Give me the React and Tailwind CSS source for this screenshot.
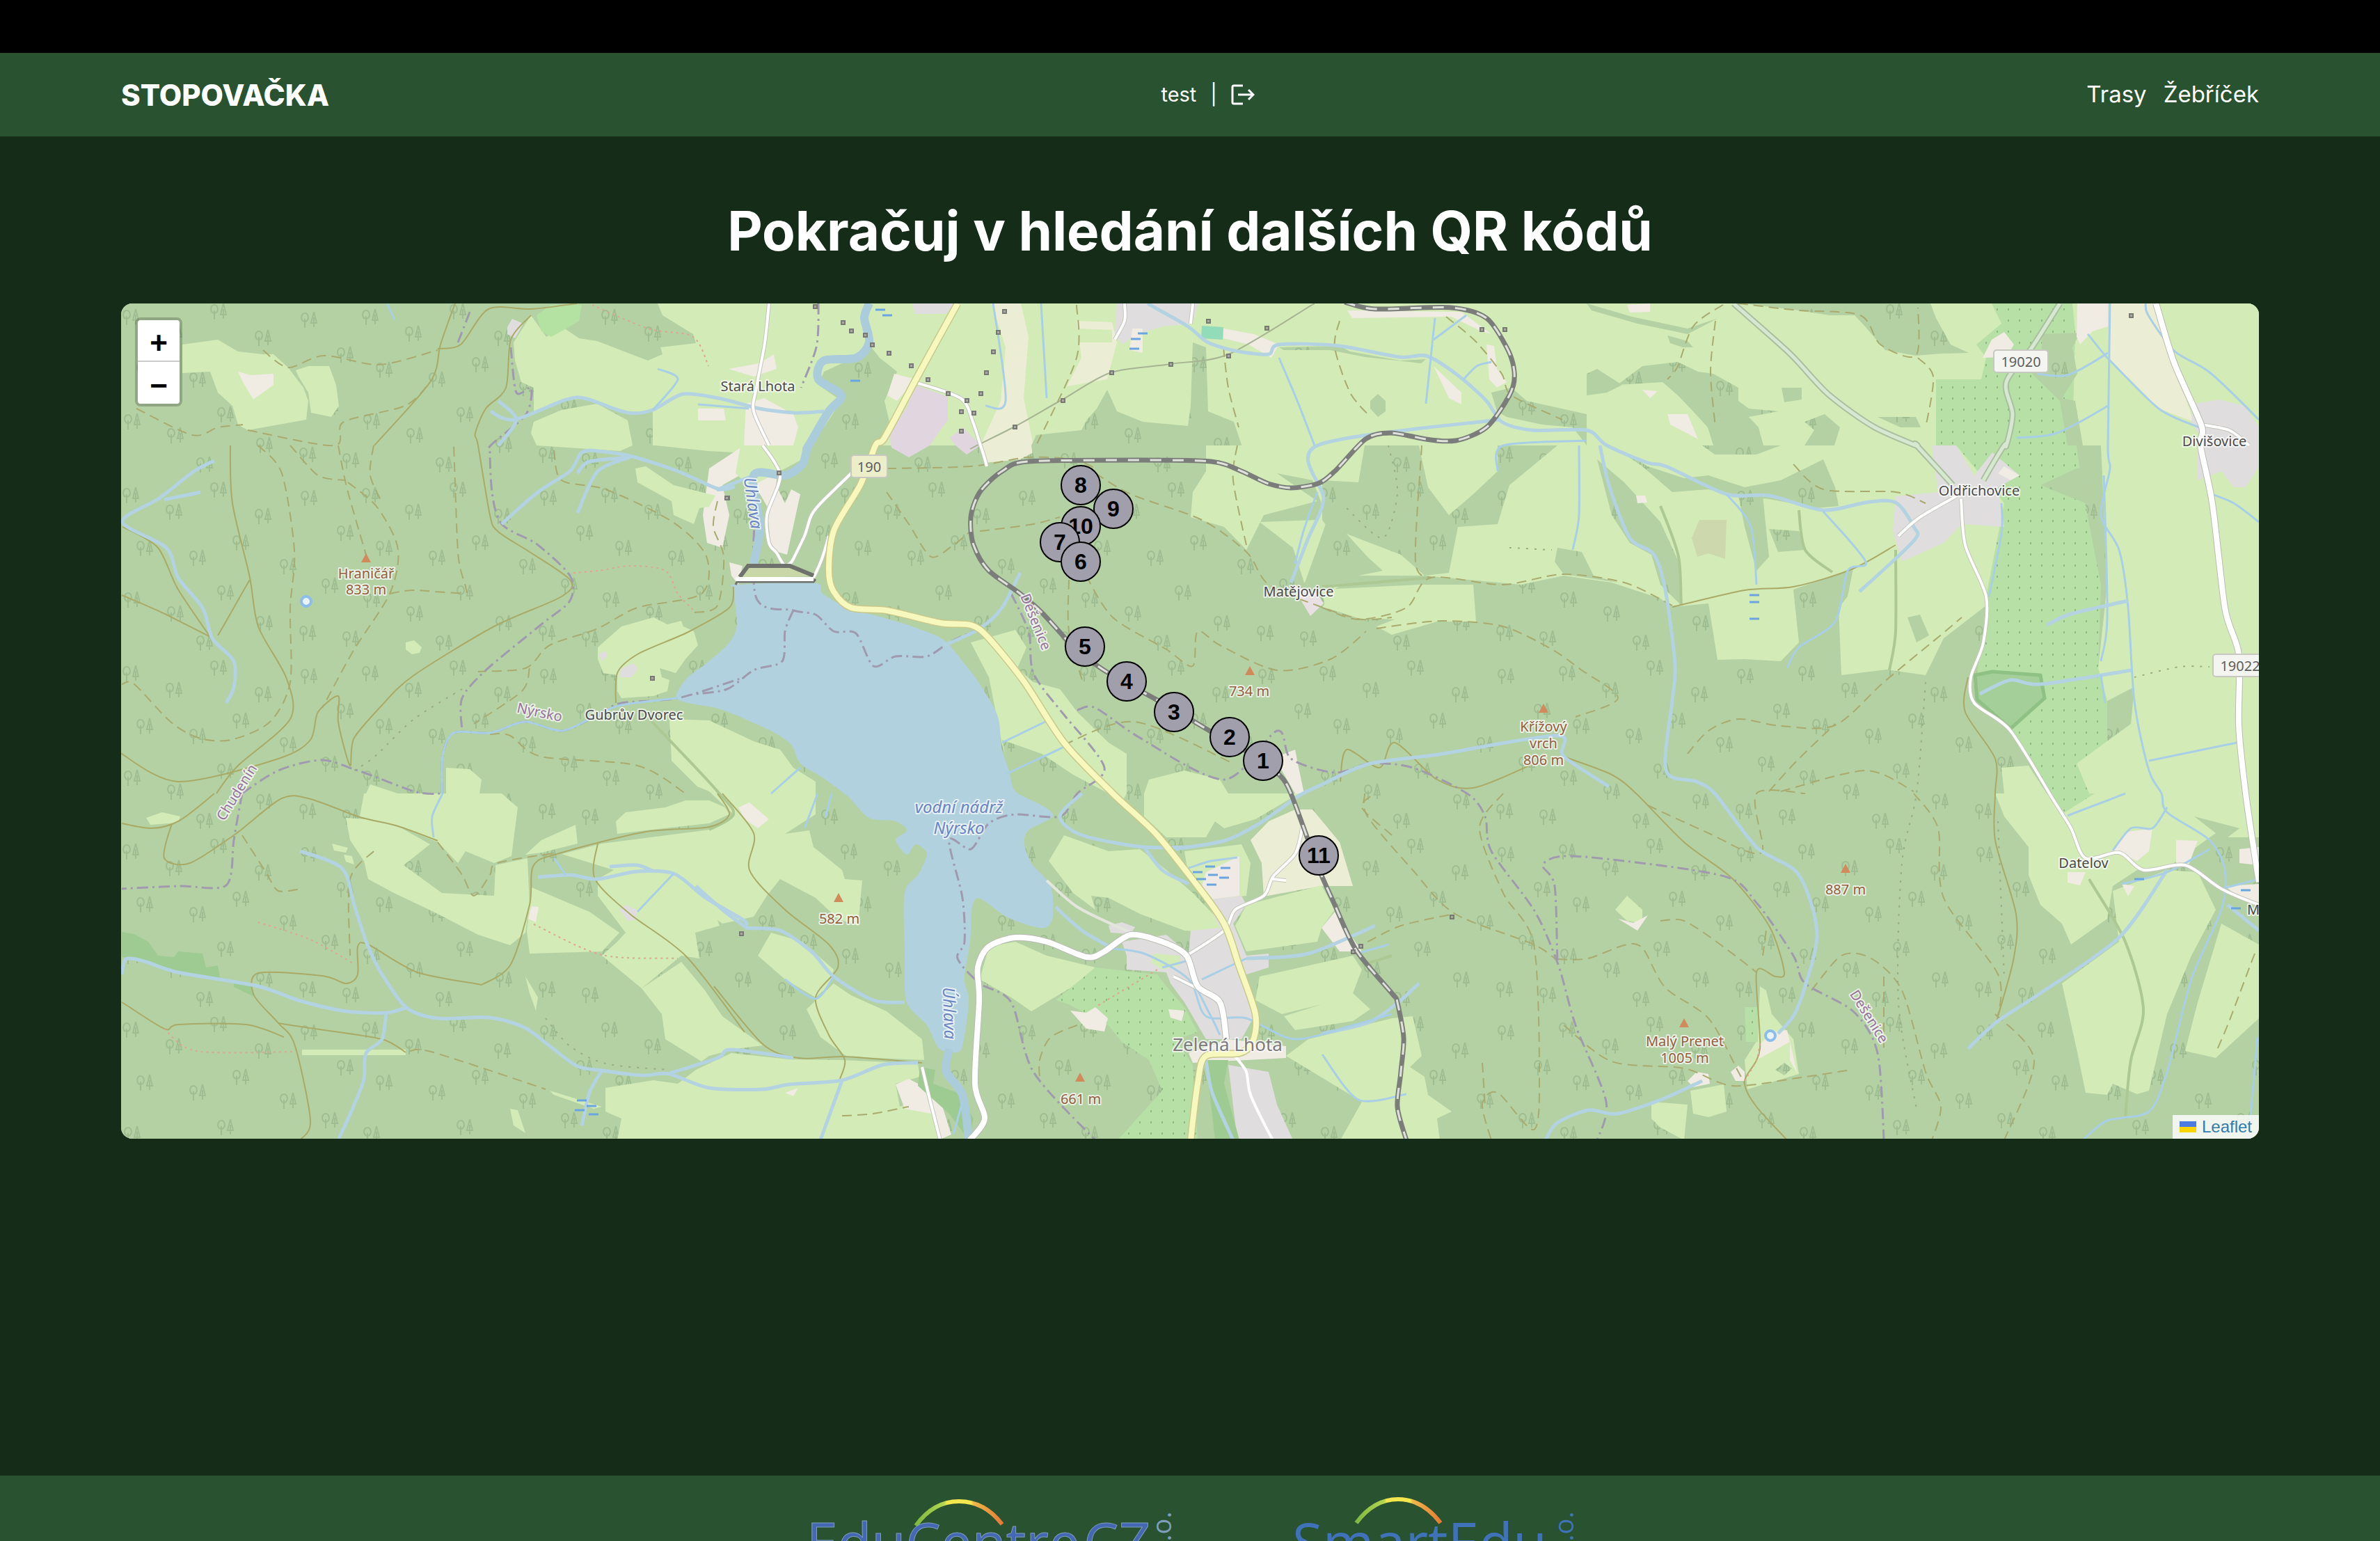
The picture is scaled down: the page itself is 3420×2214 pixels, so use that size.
import React from "react";

/* ---------- map geometry ---------- */

const MAP_W = 3072;
const MAP_H = 1200;

// Survey sheets: [x, y, width, height, unitsX, unitsY] in map units.
const SHEETS = {
  1: [-174, -396, 1140, 600, 1568, 1568],
  2: [966, -396, 1140, 600, 1568, 1568],
  3: [2106, -396, 1140, 600, 1568, 1568],
  4: [-4, 204, 900, 500, 1568, 1500],
  5: [826, 204, 1000, 500, 1568, 1500],
  6: [1726, 204, 1360, 500, 1568, 1500],
  7: [-4, 704, 900, 510, 1568, 1530],
  8: [826, 704, 1000, 510, 1568, 1530],
  9: [1726, 704, 1360, 510, 1568, 1530],
};

// "4:10,20 30,40 5:0,10" -> points; a "n:" prefix switches to sheet n.
function toPoints(src) {
  let sheet = SHEETS[1];
  return src.trim().split(/\s+/).map((tok) => {
    let t = tok;
    const i = t.indexOf(":");
    if (i > 0) {
      sheet = SHEETS[t.slice(0, i)];
      t = t.slice(i + 1);
    }
    const [u, v] = t.split(",").map(Number);
    const [x, y, w, h, ux, uy] = sheet;
    return [Math.round(x + (u * w) / ux), Math.round(y + (v * h) / uy)];
  });
}

const polygon = (src) => "M" + toPoints(src).map((p) => p.join(" ")).join("L") + "Z";
const polyline = (src) => "M" + toPoints(src).map((p) => p.join(" ")).join("L");

function curve(src, closed) {
  const p = toPoints(src);
  const n = p.length;
  const at = (i) => (closed ? p[(i + n) % n] : p[Math.max(0, Math.min(n - 1, i))]);
  let d = `M${p[0][0]} ${p[0][1]}`;
  const last = closed ? n : n - 1;
  for (let i = 0; i < last; i++) {
    const a = at(i - 1), b = at(i), c = at(i + 1), e = at(i + 2);
    const k = 7;
    d += `C${Math.round(b[0] + (c[0] - a[0]) / k)} ${Math.round(b[1] + (c[1] - a[1]) / k)} ${Math.round(c[0] - (e[0] - b[0]) / k)} ${Math.round(c[1] - (e[1] - b[1]) / k)} ${c[0]} ${c[1]}`;
  }
  return closed ? d + "Z" : d;
}

const MEADOW = "#d3ebb6";
const FOREST = "#b4d1a4";
const ORCHARD = "#b6e0a6";
const FARM = "#f0ebe3";
const FIELD = "#ecedd5";
const TOWN = "#dfdddd";
const INDUSTRY = "#e1d6e0";
const RESERVE = "#9ecb91";

const LAND = [
  [MEADOW, "1:360,1190 430,1170 470,1215 520,1225 540,1225 570,1275 600,1350 610,1400 605,1470 490,1510 470,1490 460,1420 430,1370 415,1290 360,1295"],
  [MEADOW, "1:585,1285 610,1270 650,1270 665,1340 670,1420 655,1460 615,1445 610,1370 590,1310"],
  [FARM, "1:470,1290 495,1305 540,1300 540,1340 500,1395 480,1330"],
  [MEADOW, "1:1015,1180 1050,1080 1080,1160 1110,1120 1145,1165 1180,1175 1280,1250 1310,1225 1305,1200 1375,1185 1370,1150 1310,1080 1300,1035 1568,1035 1568,1568 1290,1568 1290,1440 1240,1442 1160,1390 1110,1400 1055,1445 1055,1350 1030,1330 1018,1250"],
  [MEADOW, "1:1055,1480 1110,1435 1180,1410 1240,1475 1250,1568 1225,1590 1060,1568 1050,1520"],
  [MEADOW, "1:1300,1440 1568,1440 1568,1568 1500,1600 1400,1590 1295,1568"],
  ["#b4e2a2", "1:1060,1080 1090,1040 1150,1040 1145,1100 1120,1130 1090,1160 1070,1140"],
  [TOWN, "1:1003,1125 1013,1092 1034,1110 1018,1165 1003,1150"],
  [FARM, "1:1380,1430 1430,1430 1435,1475 1380,1475"],
  [FARM, "1:1440,1280 1500,1260 1530,1225 1535,1280 1490,1310"],

  [MEADOW, "2:0,1030 1568,1030 1568,1568 0,1568"],
  [MEADOW, "3:0,1030 1329,1030 1329,1568 0,1568"],
  [FARM, "1:1475,1410 1510,1390 1568,1450 2:10,1500 0,1568 5:60,170 75,300 60,440 25,420 15,300 30,100 1:1470,1568"],
  ["forest", "2:60,1290 120,1240 150,1190 170,1240 205,1290 180,1400 190,1480 160,1580 5:330,90 250,250 200,480 130,520 120,400 160,260 170,180 2:60,1500 95,1400 50,1340"],
  [FARM, "5:130,60 190,50 180,170 200,250 215,190 235,210 205,470 170,450 160,260 115,110"],
  [INDUSTRY, "2:240,1340 305,1385 305,1470 270,1568 5:480,50 440,10 2:190,1530 225,1420"],
  [FARM, "2:200,1300 242,1320 205,1400 185,1380"],
  [INDUSTRY, "2:335,1500 370,1568 5:610,40 585,0 2:310,1540"],
  [FIELD, "2:390,1035 450,1035 465,1160 455,1390 475,1568 5:760,30 730,60 650,75 2:370,1568 410,1400 420,1200 395,1050"],
  [FIELD, "2:560,1100 630,1105 640,1180 620,1320 540,1345 570,1240"],
  [MEADOW, "2:560,1130 630,1135 630,1180 560,1180"],
  [TOWN, "2:640,1035 800,1035 790,1110 730,1120 680,1150 650,1190 635,1150"],
  [TOWN, "2:235,1035 330,1035 300,1075 240,1075"],
  [FARM, "2:670,1130 690,1130 690,1220 665,1210"],
  ["#92dcba", "2:808,1118 850,1125 848,1172 806,1165"],
  [FARM, "2:850,1130 910,1150 960,1190 945,1240 900,1190 850,1165"],
  [FARM, "2:1370,1190 1385,1195 1390,1280 1410,1330 1390,1350 1375,1320"],
  [FARM, "2:1265,1270 1320,1370 1320,1415 1295,1390"],
  [FARM, "2:1095,1060 1320,1065 1380,1150 1360,1140 1300,1085 1105,1090"],
  ["forest", "2:470,1568 480,1530 570,1510 580,1470 600,1430 620,1360 640,1440 690,1480 780,1495 785,1420 790,1180 815,1200 820,1440 870,1480 890,1590 5:1150,0 1150,110 1120,200 1115,310 1190,350 1240,440 1290,540 1340,590 1300,640 900,640 760,60"],
  ["forest", "2:1380,1370 1420,1350 1450,1400 1568,1450 1568,1568 1540,1500 1480,1490 1410,1460 1390,1440"],
  ["forest", "2:1140,1400 1155,1375 1170,1400 1170,1440 1155,1460 1140,1430"],
  ["forest", "2:960,1200 1080,1195 1100,1215 1200,1250 1250,1245 1240,1260 1130,1235 1060,1210 970,1210"],

  ["forest", "3:160,1155 200,1175 210,1200 190,1200 165,1185"],
  ["forest", "3:60,1340 110,1270 180,1255 220,1290 250,1300 300,1350 300,1400 320,1430 380,1440 320,1460 340,1500 350,1568 250,1568 240,1500 210,1440 180,1380 150,1330"],
  ["forest", "3:385,1350 425,1350 425,1395 390,1405"],
  ["forest", "3:430,1480 470,1450 500,1500 490,1568 430,1568 450,1510"],
  ["forest", "3:575,1460 650,1460 660,1500 620,1500"],
  ["forest", "3:310,1035 680,1035 690,1090 720,1190 755,1220 700,1222 650,1230 590,1210 550,1120 530,1080 480,1080 420,1060"],
  ["forest", "3:0,1035 90,1085 200,1130 260,1090 200,1150 100,1110 10,1060"],
  ["forest", "3:0,1300 20,1280 70,1340 40,1370 0,1380"],
  [FARM, "3:80,1040 125,1035 125,1065 85,1070"],
  [FARM, "3:110,1360 140,1365 125,1390"],
  [FARM, "3:160,1450 200,1450 220,1545 205,1530 165,1490"],
  [ORCHARD, "3:690,1320 780,1320 790,1240 770,1190 820,1110 800,1035 960,1035 965,1140 960,1568 690,1568"],
  ["forest", "3:900,1150 975,1145 960,1200 970,1300 940,1390 965,1400 980,1568 950,1568 935,1400 880,1300 900,1220"],
  [FARM, "3:782,1240 800,1170 825,1143 845,1190 830,1235"],
  [FARM, "3:970,1035 1030,1035 1030,1120 1000,1140 975,1190 968,1160"],
  [FIELD, "3:1035,1035 1125,1035 1150,1150 1165,1300 1185,1400 1200,1480 1130,1430 1080,1330 1035,1250"],
  [TOWN, "3:1200,1410 1250,1395 1300,1420 1329,1500 6:1552,90 1530,180 1510,180 1490,110 1450,150 1450,0 3:1215,1540 1195,1480"],

  [MEADOW, "4:1295,100 1320,90 1390,170 1495,215 1480,265 1455,270 1440,340 1390,300 1385,240 1300,160"],
  [MEADOW, "4:1200,870 1260,780 1340,740 1375,770 1410,755 1415,780 1440,800 1452,860 1420,920 1395,980 1355,960 1360,1000 1380,1010 1375,1060 1340,1080 1260,1090 1250,1060 1250,990 1215,980 1200,920"],
  [MEADOW, "4:720,850 740,840 760,870 755,895 735,900 720,880"],
  [TOWN, "4:1260,960 1290,940 1302,960 1285,1000 1255,1000"],
  [TOWN, "4:1203,900 1220,885 1225,905 1210,930"],
  [MEADOW, "4:1380,1180 1480,1185 5:130,1275 190,1310 220,1390 270,1450 8:270,10 270,90 200,175 255,160 265,230 330,330 335,370 375,375 365,570 320,540 270,450 190,370 160,440 130,530 60,560 7:1500,545 1505,570 1445,600 1455,710 1410,700 1310,840 1210,700 1250,640 1270,600 1200,440 1200,370 1240,330 1110,260 1210,215 1480,155 1540,90 4:1480,1490 1450,1470 1385,1360"],
  [MEADOW, "5:100,0 250,0 240,60 120,180 90,120"],
  [MEADOW, "7:1245,120 1270,80 1370,60 1420,30 1480,30 1520,60 1530,90 1480,130 1320,160 1250,175"],
  [MEADOW, "7:1020,265 1060,200 1145,135 1150,215 1060,255"],
  [MEADOW, "7:1035,405 1180,510 1255,600 1210,680 1030,690 1022,590 1030,480"],
  [MEADOW, "7:1310,840 1410,725 8:20,850 60,960 150,1085 90,1100 30,1130 7:1460,1155 1370,1060 1360,950"],
  [MEADOW, "8:170,600 240,640 310,760 300,830 270,880 200,800 140,700"],
  [MEADOW, "8:250,930 310,820 350,870 430,940 510,1060 515,1150 340,1135 280,1050"],
  [MEADOW, "8:0,1190 80,1120 210,1145 330,1150 500,1165 505,1220 450,1250 460,1350 540,1290 550,1495 0,1495 7:1250,1495 1260,1400 1220,1370 1220,1270 1340,1235 1400,1250"],
  [MEADOW, "4:620,1500 630,1460 700,1500 7:960,0 1000,60 985,270 940,300 870,250 850,300 800,210 700,140 605,100 615,0"],
  [MEADOW, "7:570,105 620,110 700,140 780,220 715,310 810,430 940,440 945,310 1025,280 1030,480 1020,600 980,655 900,610 790,510 690,430 625,370 615,290 580,200"],
  [MEADOW, "4:820,1390 880,1395 910,1440 905,1500 820,1500"],
  [MEADOW, "7:70,105 110,80 155,100 150,125 80,135"],
  [MEADOW, "7:460,1105 720,1105 720,1128 460,1128"],
  [MEADOW, "7:1020,790 1050,880 1045,935 1030,860"],
  [MEADOW, "7:980,1360 1000,1365 1020,1465 990,1430"],
  [MEADOW, "7:535,215 575,235 570,255 540,245"],
  [MEADOW, "7:565,265 585,270 590,305 570,295"],
  [MEADOW, "7:1080,1280 1210,1350 1190,1360 1090,1300"],
  [FARM, "7:1035,485 1052,490 1045,555 1027,540"],
  [TOWN, "7:1255,500 1270,480 1300,505 1295,545 1275,550"],
  [FARM, "8:95,60 120,40 165,110 140,150 110,110"],
  [FARM, "8:450,1255 480,1230 510,1260 545,1290 575,1470 550,1490 530,1380 470,1360"],
  [FARM, "8:200,1290 230,1270 220,1305"],
  [RESERVE, "7:8,598 40,605 75,640 100,700 140,705 150,680 210,690 220,750 250,740 255,795 190,780 120,760 60,715 8,705"],
  [RESERVE, "7:290,815 335,825 340,875 290,835"],

  [MEADOW, "5:620,850 720,795 745,870 725,960 760,1020 820,1050 860,1150 930,1280 970,1330 970,1500 8:960,40 730,0 5:690,1290 660,1000"],
  ["forest", "5:690,1270 780,1330 850,1420 930,1500 8:960,40 840,160 750,170 770,90 5:715,1480"],
  [MEADOW, "8:830,180 930,250 1000,240 1060,330 1120,430 1190,570 1180,600 1100,590 1000,520 930,450 890,440 900,500 850,430 795,290"],
  [MEADOW, "5:1010,1500 1020,1440 1100,1400 1180,1440 1200,1500 8:1360,0 1260,110 1190,150 1170,120 1150,190 1060,190 1010,100"],
  [MEADOW, "8:660,660 720,640 790,700 900,750 850,830 755,940 710,880 640,800"],
  [ORCHARD, "8:900,750 1040,780 1060,830 1100,920 1130,1030 1080,1060 1120,1170 1130,1495 950,1495 1050,1280 1020,1150 960,1070 930,1000 840,910 810,890"],
  [FARM, "8:843,935 880,945 900,920 928,970 920,1025 880,1015"],
  [FARM, "8:1065,930 1100,935 1095,980 1070,965"],
  [MEADOW, "8:1100,250 1230,220 1250,300 1240,440 1150,460 1110,360"],
  ["#efeae6", "8:1150,340 1225,270 1225,440 1165,455 1140,400"],
  [TOWN, "8:1150,460 1230,440 1240,480 1210,560 1240,700 1290,690 1290,750 1240,780 1260,950 1230,1060 1150,1060 1100,900 1070,820 1060,770 970,760 970,700 960,640 1060,610 1110,690 1115,590 1180,580"],
  [TOWN, "8:930,570 960,555 990,575 980,605 935,600"],
  [MEADOW, "8:1030,690 1090,700 1090,740 1050,760 1025,730"],
  [TOWN, "8:1200,1170 1290,1200 1310,1340 1345,1495 1220,1495"],
  [FARM, "8:1110,1120 1200,1060 1330,1090 1330,1140 1120,1160"],
  [FIELD, "8:1290,120 1350,70 1390,70 1450,210 1480,400 1410,400 1280,445 1275,300 1250,200"],
  [FARM, "8:1410,580 1440,510 1500,680 1450,680"],
  [FARM, "5:1310,1340 1350,1310 1360,1400 1370,1500 1350,1500 1320,1400"],
  [MEADOW, "8:1240,480 1410,395 1440,500 1410,580 1400,640 1240,680 1215,570"],
  [MEADOW, "8:1270,790 1480,700 1500,760 1480,860 1520,930 1480,980 1350,1020 1325,960 1410,910 1320,950 1260,890"],
  [MEADOW, "8:1380,1060 1568,970 9:150,960 165,1130 145,1180 170,1220 175,1300 215,1370 190,1400 195,1495 30,1495 8:1500,1330 1330,1130"],
  [RESERVE, "8:505,1180 540,1190 535,1250 590,1290 625,1400 615,1495 570,1380 500,1260"],
  [RESERVE, "8:1150,1150 1200,1150 1190,1250 1225,1495 1170,1495"],

  [MEADOW, "5:1300,0 1390,0 1568,0 6:70,0 60,560 20,620 0,700 5:1568,740 1500,750 1420,700 1440,600 1370,590 1345,440 1270,330 1400,320 1410,250 1390,150 1310,120"],
  [MEADOW, "5:1150,0 1310,0 1310,120 1370,200 1400,240 1280,300 1240,450 1190,350 1115,310 1120,200 1150,110"],
  ["forest", "5:1420,330 1470,430 1500,590 1430,600 1400,640 1370,600 1400,440"],
  ["#e8e0e2", "5:1340,600 1400,640 1415,680 1385,735 1370,690"],
  [MEADOW, "6:0,300 50,470 60,560 170,560 330,600 400,560 480,590 560,660 580,695 640,680 655,925 700,920 760,930 790,850 780,620 880,530 870,650 855,700 860,990 935,965 1000,990 1030,830 1100,690 1130,350 1130,0 60,0 0,150"],
  [MEADOW, "6:0,620 160,600 250,600 255,758 190,758 115,815 90,780 120,750 60,740 5,700"],
  ["forest", "6:70,0 160,0 175,180 210,300 250,210 290,110 290,0 390,0 310,170 290,340 225,350 210,550 170,560 130,470 40,380 75,480 100,540 60,560 30,430 0,320 0,150 60,160"],
  ["forest", "6:480,0 540,90 600,140 640,130 700,180 760,150 830,60 850,180 855,260 820,270 740,230 680,215 640,190 580,200 530,90"],
  ["forest", "6:390,440 430,460 450,560 490,590 400,555 385,500"],
  ["forest", "6:455,60 500,160 560,330 590,500 595,690 560,600 545,470 510,420 480,300"],
  ["forest", "6:740,360 790,370 800,450 755,460"],
  ["forest", "6:630,0 760,0 720,40 650,40"],
  ["forest", "6:970,740 990,730 1005,820 985,850"],
  ["forest", "6:1335,235 1355,230 1357,300 1335,300"],
  ["forest", "6:690,215 730,215 740,480 720,540 700,350"],
  ["#cdd8ad", "6:625,320 670,320 668,490 640,465 622,480 612,400"],
  [ORCHARD, "6:1050,0 1140,0 1250,0 1260,200 1290,600 1285,960 1300,1100 1300,1280 1250,1370 1270,1500 1200,1500 1170,1330 1140,1220 1190,1100 1180,985 1085,980 1095,820 1100,650 1130,250"],
  ["forest", "6:1190,170 1250,100 1290,90 1290,580 1265,250"],
  [MEADOW, "6:1290,0 1450,0 1552,90 1552,1500 1270,1500 1250,1370 1340,1200 1345,1040 1300,1100 1285,960 1300,600"],
  [MEADOW, "6:1125,1390 1170,1380 1200,1500 1130,1500"],
  [TOWN, "6:1010,0 1050,0 1080,130 1110,30 1155,130 1120,180 1130,350 1060,340 1030,420 960,500 945,370 950,220 1020,200"],
  [FARM, "6:1130,90 1155,130 1140,150 1120,120"],
  [TOWN, "6:1450,0 1552,0 1552,90 1530,180 1510,180 1490,110 1450,150"],
  ["#a5cf98", "6:1082,990 1110,975 1190,990 1197,1090 1140,1222 1085,1095"],
  [FARM, "6:520,215 535,215 538,245 522,250"],

  [MEADOW, "9:1115,0 1552,0 1552,190 1500,190 1520,150 1445,100 1480,170 1400,320 1350,330 1310,400 1300,540 1240,650 1225,560 1190,480 1170,350 1170,230 1130,100"],
  [ORCHARD, "9:1200,0 1280,0 1230,80"],
  [MEADOW, "9:1310,420 1400,330 1450,340 1480,500 1440,700 1400,950 1370,1280 1350,1295 1310,1250 1300,1300 1265,1290 1250,1100 1225,820 1320,640"],
  [MEADOW, "9:1490,560 1552,650 1552,970 1480,1140 1430,1110 1450,900"],
  [FARM, "9:1335,165 1375,150 1370,250 1350,290 1310,245"],
  [FARM, "9:1415,200 1450,205 1435,310 1415,305"],
  [FARM, "9:1235,340 1265,340 1255,395 1235,385"],
  [FARM, "9:1520,240 1552,230 1552,310 1520,300"],
  [FARM, "9:1495,400 1552,390 1552,470 1515,440"],
  [FARM, "9:1325,390 1345,400 1335,445"],
  [MEADOW, "9:505,440 530,500 530,560 505,550 485,500"],
  [FARM, "9:490,540 515,558 540,525 522,592"],
  [MEADOW, "9:725,830 735,850 745,950 780,1060 790,1210 705,1275 700,1150 722,1060"],
  [FARM, "9:745,1030 770,1020 788,1210 775,1150 775,1070 720,1150 725,1080"],
  [ORCHARD, "9:700,920 722,920 722,1070 702,1070"],
  [FARM, "9:605,1240 620,1200 640,1210 642,1250 615,1265"],
  [FARM, "9:677,1200 690,1172 700,1200 700,1240 685,1240"],
  [MEADOW, "9:610,1280 665,1255 670,1370 640,1395 615,1380"],
  [MEADOW, "9:545,1330 605,1340 600,1495 560,1440 545,1400"],
  ["forest", "9:750,1190 765,1160 778,1185 765,1215"],
];

const LAKE =
  "5:90,600 265,590 285,640 340,700 420,740 500,790 560,840 600,930 640,1030 680,1170 688,1300 705,1400 720,1490 8:780,50 805,100 750,160 740,220 755,300 800,400 805,530 790,575 765,575 700,530 640,452 622,490 618,640 605,800 615,890 600,1090 580,1115 545,1095 520,1000 475,900 470,700 470,430 500,350 520,260 495,220 475,265 450,200 475,160 450,120 390,105 340,10 5:285,1430 235,1370 215,1290 170,1230 110,1180 50,1135 4:1400,1095 1420,1010 1480,930 1530,850 1548,770 1540,620";

const LINE_STYLES = {
  brook: "fill-none stroke-[#b3d2e2] stroke-5",
  ditch: "fill-none stroke-[#a9cfe6] stroke-3",
  river: "fill-none stroke-[#abcddb] stroke-12",
  track: "fill-none stroke-[#a9aa66] stroke-2",
  path: "fill-none stroke-[#a9ab6e] stroke-2 [stroke-dasharray:14_8]",
  trail: "fill-none stroke-[#dfa58f] stroke-2 [stroke-dasharray:3_5]",
  dots: "fill-none stroke-[#9aab85] stroke-2 [stroke-dasharray:3_9]",
  border: "fill-none stroke-[#a09aae] stroke-3 [stroke-dasharray:16_6_3_6]",
  power: "fill-none stroke-[#a7b493] stroke-2",
  hedge: "fill-none stroke-[#acc893] stroke-4",
};

const LINES = [
  ["hedge", "7:1480,155 1540,90 4:1500,1490 1330,1180"],
  ["hedge", "8:1568,700 1500,740"],
  ["hedge", "6:950,450 950,800 940,970"],
  ["hedge", "6:560,260 590,480 595,690"],
  ["hedge", "6:790,280 800,450 845,545"],
  ["hedge", "6:0,610 180,570"],
  ["hedge", "9:1270,370 1330,640 1360,930 1340,1150 1330,1400"],
  ["power", "2:1030,1035 860,1225 745,1262 628,1293 530,1398 438,1497 350,1580"],
  ["track", "1:900,1035 870,1190 850,1330 740,1568"],
  ["track", "1:1140,1035 1050,1055 965,1055 910,1190 865,1205"],
  ["track", "1:1050,1080 1010,1170 1000,1350 960,1430 940,1520 4:900,0 930,300 950,370 1030,460 1130,580 1110,650 940,780 740,990 660,1120 590,1260 580,1380 550,1190 550,1080 500,1150 480,1270 400,1350 150,1450 0,1320"],
  ["track", "4:280,0 285,250 330,570 350,780 420,1000 430,1180 300,1380 245,1500"],
  ["track", "4:330,580 250,820"],
  ["track", "4:10,350 100,440 150,620 230,825"],
  ["track", "4:8,645 120,730 230,825"],
  ["track", "4:1540,610 1530,700 1430,800 1300,900 1250,980 1245,1110"],
  ["track", "8:60,0 130,170 120,330 200,500 300,650 320,750 270,880 300,1040 335,1150 325,1230"],
  ["track", "8:40,830 150,1080 230,1140 335,1135 510,1160"],
  ["track", "7:8,130 80,150 150,120 240,0"],
  ["track", "7:135,130 115,280 180,300 290,180 410,20 480,25 600,100 700,140 800,205"],
  ["track", "7:910,825 980,740 1030,480 1040,310 1110,255 1320,165 1480,145 1530,90 1500,0"],
  ["track", "7:910,825 750,770 625,650 600,660 600,780 570,820 510,785 350,775 340,870 400,990 440,1080 480,1410 455,1495"],
  ["track", "7:8,900 115,1015 150,995 320,995 415,1050"],
  ["track", "7:400,990 540,1025 660,1060 720,1115"],
  ["track", "7:1200,215 1193,370 1280,520 1420,700 1568,1030"],
  ["track", "6:30,1450 40,1310 95,1390 120,1280 190,1440 250,1475 350,1370"],
  ["track", "6:400,1340 480,1420 520,1500 9:600,210 680,370 740,570 765,770 750,790 720,770 725,1100 700,1240 720,1350 770,1495"],
  ["track", "6:580,695 700,625 780,610 880,530 950,430"],
  ["track", "6:1070,1000 1065,1150 1115,1350 1115,1500 9:1115,200 1150,520 1145,720 1120,960"],
  ["path", "9:810,850 860,700 910,710 960,850 1000,1200 1025,1350 1010,1495"],
  ["path", "9:980,0 1020,150 1030,450 1120,780 1118,980"],
  ["path", "4:350,0 410,120 440,450 430,700 430,1020 380,1190 280,1270 200,1260 130,1190 40,1030 8,1030"],
  ["path", "4:430,0 500,130 570,150"],
  ["path", "4:550,0 575,200 620,470"],
  ["path", "4:575,160 650,270 700,450 680,640 590,880 510,1130"],
  ["path", "4:640,0 630,130 660,250"],
  ["path", "4:680,640 740,625 860,635 870,610 850,460 840,0"],
  ["path", "4:1090,20 1110,150 1220,190 1380,320 1470,470 1460,640 1300,700 1200,790 1080,860 1020,960 900,975"],
  ["path", "4:1030,960 1010,1060 890,1200"],
  ["path", "4:930,1245 980,1250 1060,1340 1300,1380 1420,1500"],
  ["path", "4:1500,240 1490,350 1515,480 1500,690 1440,720"],
  ["dots", "4:860,1050 740,1180 650,1330 590,1400"],
  ["path", "1:520,1210 570,1275 640,1232 750,1265 865,1210"],
  ["path", "1:490,1510 660,1568 680,1480 800,1420 850,1330"],
  ["path", "1:270,1430 380,1530 430,1500 480,1490"],
  ["path", "7:730,1110 790,1115 1070,1275"],
  ["path", "7:310,180 370,340 400,420 460,410"],
  ["path", "7:640,250 580,370 580,700"],
  ["dots", "7:1070,970 1130,1090 1220,1165 1380,1190"],
  ["path", "7:800,210 860,350 890,440 930,350 950,300 1100,255"],
  ["path", "5:900,120 980,210 1140,320 1240,460 1290,600 1400,690 1500,750 1568,740"],
  ["path", "5:640,370 760,340 820,310"],
  ["path", "5:430,100 620,90 750,50 850,60 900,100"],
  ["path", "5:430,200 480,340 530,480 580,430 620,370"],
  ["path", "5:840,580 840,800 870,1010"],
  ["path", "5:880,560 940,740 1060,880 1120,950 1130,800 1180,860 1310,970 1430,920 1510,800"],
  ["path", "5:830,1290 990,1190 1210,1370"],
  ["path", "5:1220,0 1210,150 1240,430"],
  ["path", "2:850,1200 860,1350 880,1500"],
  ["path", "2:1080,1100 1070,1200 1100,1370 1140,1460"],
  ["path", "2:560,1040 560,1240 480,1568"],
  ["path", "2:1290,1085 1350,1180 1400,1300 1420,1380 1520,1470"],
  ["path", "3:270,1040 210,1120 180,1270 160,1320"],
  ["path", "3:255,1100 245,1290 255,1500"],
  ["path", "3:300,1035 420,1060 540,1080 580,1190 650,1230 655,1050"],
  ["path", "3:655,1240 685,1310 670,1500"],
  ["path", "6:0,700 60,750 140,700 180,570 300,600 400,555 500,590 580,690"],
  ["path", "6:165,0 155,500 180,570"],
  ["path", "6:90,790 200,755 300,780 380,880 430,970 490,1090 420,1170"],
  ["path", "6:605,1330 640,1230 690,1180 760,1210 850,1205 930,1020 1010,850 1060,740"],
  ["path", "6:780,80 830,190 950,200 1000,250"],
  ["path", "6:740,1490 790,1350 850,1200"],
  ["path", "6:760,1490 900,1400 980,1490"],
  ["dots", "6:110,0 125,200 100,400 40,270"],
  ["dots", "6:310,440 380,450"],
  ["dots", "6:1345,1000 1420,955 1470,955"],
  ["dots", "6:1000,1020 985,1500 9:960,300 955,900 985,1360"],
  ["path", "9:70,0 75,100 150,330 220,520 350,650 390,720"],
  ["path", "9:75,640 130,570 220,520"],
  ["path", "9:390,715 440,710 500,655 530,665 570,840 640,970 690,1200 700,1250"],
  ["path", "9:300,0 260,150 300,430 350,650 360,1200 350,1450 290,1290 265,1340 280,1495"],
  ["path", "9:265,1160 270,1340"],
  ["path", "9:560,548 600,550 660,650 720,770"],
  ["path", "9:400,1000 480,1155 600,1185 680,1260 800,1220 870,1195"],
  ["path", "9:540,50 640,170 700,245 730,240 720,0 800,0"],
  ["path", "9:730,700 735,590"],
  ["path", "9:1115,950 1180,1150 1130,1495"],
  ["path", "9:930,790 930,1100"],
  ["dots", "9:1120,120 1130,800"],
  ["path", "9:1545,690 1500,1000 1480,1120"],
  ["path", "8:860,1000 800,1050 775,1150 775,1230"],
  ["path", "8:330,1390 400,1380 480,1350"],
  ["path", "8:1568,180 1500,60 1530,0"],
  ["trail", "4:1140,550 1200,540 1280,520 1370,540 1400,640 1440,710"],
  ["trail", "7:350,555 480,630 590,735"],
  ["trail", "7:1040,565 1210,695 1400,712"],
  ["trail", "7:115,1015 195,1110 440,1112"],
  ["trail", "1:1170,1040 1280,1130 1370,1160 1400,1270"],
  ["trail", "8:1040,760 900,920"],
  ["trail", "9:700,1240 720,1150 725,1080"],
  ["border", "1:905,1180 930,1060"],
  ["border", "1:1010,1200 1020,1370 1050,1350 1040,1450 970,1568 4:930,30 935,200 960,340 1050,430 1130,560 1130,670 1060,770 920,970 860,1090 860,1230"],
  ["border", "4:310,1500 400,1400 510,1355 600,1400 740,1490 810,1500"],
  ["border", "4:810,1500 812,1340 840,1240 930,1240 1020,1190 1110,1230 1200,1160 1260,1110 1400,1090 1568,1000"],
  ["border", "7:310,0 290,200 270,395 150,400 8,410"],
  ["border", "5:135,180 135,650 220,710 270,730 310,800 360,810 400,950 450,910 520,910 570,850 640,790"],
  ["border", "5:220,710 200,800 195,930 130,970 70,1050 0,1070"],
  ["border", "5:710,640 750,800 760,980 830,1160 920,1390 860,1500 8:820,100 720,90 660,130 620,240 570,200 600,450 605,640 590,710 640,820 710,900 760,1200 900,1495"],
  ["border", "5:860,1140 900,1130 1000,1260 1190,1440 1310,1230 1340,1350 1440,1410 6:80,1370 150,1390 240,1500 9:270,100 280,250 350,500 390,730 420,1000 470,1330 455,1495"],
  ["border", "9:390,720 385,400 365,310 400,270 500,290 670,360 720,470 780,700 800,820 880,940 920,1120 930,1490"],
  ["border", "2:50,1035 45,1200 15,1350"],

  ["brook", "4:240,65 190,110 100,230 10,330 120,440 150,570 210,700 235,830 290,930 290,1040 270,1110"],
  ["brook", "4:205,200 115,235"],
  ["brook", "4:960,340 1050,200 1130,110 1160,30 1200,25 1280,45 1400,110 1500,185 1540,180 5:50,190 130,130"],
  ["brook", "4:1150,120 1180,70 1280,50"],
  ["brook", "4:1150,290 1200,110 1280,50"],
  ["ditch", "4:810,1500 812,1340 840,1240 930,1240 1020,1190 1110,1230 1200,1160 1260,1120 1400,1090"],
  ["ditch", "7:812,0 785,100 790,190"],
  ["brook", "7:455,250 560,320 590,480 625,660 660,780 720,920 800,970 930,965 1020,1010 1080,1090 1150,1175 1210,1195 1310,1215 1380,1210 8:30,1270 150,1275 210,1255 330,1235 420,1170 500,1160"],
  ["brook", "7:1380,1205 1500,1140 8:80,1105 220,1140"],
  ["brook", "7:8,780 20,715 70,725 150,770 350,830 450,890 560,935 670,945 720,925"],
  ["brook", "7:670,945 660,1060 620,1120 615,1230 590,1340 550,1495"],
  ["brook", "7:1210,1195 1180,1290 1160,1430"],
  ["brook", "7:1050,360 1130,350 1200,370 1300,335 1390,345 1470,450 1568,550 8:115,580 190,590 260,680 310,790 400,890 470,900"],
  ["ditch", "7:1090,280 1120,350"],
  ["brook", "7:1230,315 1300,310 1340,335"],
  ["ditch", "7:1390,345 1300,510"],
  ["ditch", "8:310,790 270,885 200,800"],
  ["brook", "8:0,400 60,500 115,580"],
  ["river", "8:570,1100 565,1200 600,1300 615,1495"],
  ["brook", "8:330,1235 280,1495"],
  ["ditch", "8:600,1330 580,1470"],
  ["ditch", "1:765,1035 780,1095"],
  ["brook", "1:970,1440 1015,1470 1120,1395 1160,1393 1240,1445 1290,1435 1350,1375 1420,1390 1500,1430 1568,1445 2:60,1440"],
  ["brook", "1:985,1400 1020,1470 985,1568"],
  ["ditch", "1:1300,1280 1340,1320 1290,1435"],
  ["ditch", "1:1380,1415 1480,1430"],
  ["river", "2:150,1035 140,1090 150,1180 125,1240 60,1250 50,1320 95,1380 70,1440 30,1568 5:250,20 240,80 200,130 130,130 145,350 130,510"],
  ["brook", "2:700,1035 780,1120 820,1180 880,1215 940,1225 960,1190 1080,1195 1200,1235 1250,1230 1310,1300 1370,1400 1400,1480 1460,1510 1568,1510 3:40,1568 6:540,75 570,90 670,210 740,215 830,280 900,245 950,245 980,350 980,410 890,630"],
  ["ditch", "6:830,285 900,500 870,540 850,760 790,870 770,960"],
  ["ditch", "6:670,210 710,350 720,600"],
  ["brook", "6:460,0 475,170 510,400 550,470 570,640 585,950 580,1100 570,1400 620,1450 650,1500 9:720,230 790,350 820,600 800,830 780,960 755,1035"],
  ["ditch", "2:1568,1550 6:300,0 290,110"],
  ["ditch", "6:425,0 425,300 415,450"],
  ["brook", "8:1080,240 1190,205 1270,130 1360,10 6:0,1460 80,1370 200,1330 390,1250 400,1340 475,1470"],
  ["ditch", "2:960,1240 1000,1420 1030,1568"],
  ["brook", "2:1395,1470 5:1400,0 1415,230 1380,400 1340,590"],
  ["ditch", "5:1400,200 1370,360 1350,510"],
  ["ditch", "2:1268,1090 1250,1410"],
  ["ditch", "2:1330,1080 1265,1170"],
  ["ditch", "2:1325,1320 1350,1270 1380,1255"],
  ["ditch", "2:395,1035 420,1400 380,1420"],
  ["ditch", "2:490,1035 500,1390"],
  ["ditch", "3:1035,1035 1030,1568 6:1305,100 1290,300 1320,450 1335,700 1345,1100 1370,1400 1390,1500 9:1400,80 1470,200 1495,330 1490,500 1440,800 1400,1200 1370,1370 1300,1410 1260,1495"],
  ["ditch", "3:990,1150 1035,1250 1130,1430 1210,1500"],
  ["ditch", "3:1105,1035 1110,1080 1160,1210 1230,1290 1329,1470"],
  ["ditch", "3:850,1540 930,1520 1030,1420"],
  ["ditch", "3:890,1300 950,1305 1030,1220"],
  ["ditch", "6:1295,130 1300,750 1290,930"],
  ["ditch", "6:1125,250 1125,380 1105,650"],
  ["ditch", "6:1475,210 1510,250 1552,330"],
  ["brook", "6:1200,775 1240,725 1335,670"],
  ["brook", "6:1090,1070 1140,1010 1190,1030 1340,970"],
  ["ditch", "6:1290,990 1297,1110"],
  ["ditch", "6:1370,1360 1515,1280"],
  ["ditch", "9:1235,95 1330,0"],
  ["brook", "9:1070,1100 1120,980 1190,860 1320,620 1400,330"],
  ["ditch", "9:1310,245 1340,150 1375,150 1400,60"],
  ["ditch", "9:1325,390 1400,340 1470,240"],
  ["brook", "9:1500,480 1552,590"],
  ["ditch", "9:1550,1050 1535,1495"],
  ["ditch", "9:1490,410 1552,370"],
  ["brook", "9:370,1495 390,1420 440,1365 490,1380 570,1310 630,1240"],
  ["brook", "9:0,1035 80,985 130,890 160,820"],
  ["brook", "8:1240,710 1380,690 1530,570"],
  ["ditch", "8:1490,690 1560,650"],
  ["ditch", "8:940,670 1010,690 1110,800 1150,960 1240,970 1350,1060 1480,1000 1568,950"],
  ["ditch", "8:1050,750 1110,720"],
  ["ditch", "8:1130,850 1160,960 1180,1040"],
  ["ditch", "8:1140,800 1220,730 1240,710"],
  ["ditch", "9:0,1125 60,1320 140,1295"],
  ["brook", "8:870,0 820,100 870,180 1010,230 1110,230"],
  ["brook", "8:1010,230 1050,330 1110,390"],
  ["ditch", "8:1110,320 1160,290 1220,275"],
  ["brook", "8:810,490 870,590 940,670"],
  ["brook", "5:730,550 690,700 640,790 560,860"],
  ["ditch", "5:690,1280 800,1180"],
  ["ditch", "5:700,1415 830,1300"],
  ["ditch", "8:275,0 245,150"],
  ["ditch", "8:305,0 292,105"],
  ["ditch", "5:235,1390 170,1500"],
  ["brook", "8:1150,1150 1165,1300 1210,1495"],
];

const WHITE_LANES = [
  "5:390,50 345,130 290,230 260,300 245,390 220,490 208,512 198,512 180,460 165,420 160,300 190,130 150,0",
  "5:300,390 285,480 265,570",
  "1:1520,1035 1510,1200 1495,1350 1490,1440 1520,1568",
  "2:240,1330 330,1390 355,1480 370,1568 5:655,90",
  "2:655,1035 655,1100 635,1170",
  "2:790,1035 785,1110",
  "6:1050,220 990,310 955,390",
  "6:1058,230 1065,430 1100,650 1095,850 1075,1000 1080,1110 1140,1230 1205,1500 9:1240,150 1265,280 1320,255 1360,330 1430,310 1490,410 1552,480",
  "3:1215,1490 1270,1510 1310,1568",
  "8:1105,700 1190,590 1215,500 1280,440 1300,360 1350,260 1365,150",
  "8:1300,370 1330,375",
  "8:510,1180 530,1340 550,1495",
  "8:1075,790 1130,840",
];

const GREEN_LANES = [
  "3:290,1035 400,1220 480,1380 570,1500 650,1568 6:985,0 1045,170",
  "3:935,1035 880,1200 830,1330 842,1450 830,1568 6:1130,0 1095,150",
];

const YELLOW_ROADS = [
  "2:325,1035 240,1330 180,1540 5:405,0 370,170 310,370 300,540 310,630 350,700 430,712 550,765 620,775 660,830 740,1020 830,1280 940,1500 8:1040,180 1130,400 1190,560 1220,720 1260,950 1255,1070 1225,1120 1150,1130 1130,1250 1115,1500",
];

const WHITE_ROADS = [
  "8:615,1500 650,1400 628,1250 638,900 635,750 660,660 720,620 790,640 880,705 920,680 980,610 1050,640 1105,700 1130,830 1180,900 1195,1060",
  "3:1125,1035 1160,1250 1215,1490 6:1455,0 1475,250 1495,700 1518,900 1518,1200 1530,1500 9:1552,380",
];

const RAILWAY =
  "2:1090,1030 1150,1055 1300,1050 1370,1090 1410,1200 1425,1290 1415,1380 1370,1500 1310,1550 1250,1545 1180,1522 1130,1545 5:1440,110 1400,165 1340,183 1290,165 1230,110 1160,70 1000,62 750,68 690,110 640,200 620,310 625,430 660,540 730,640 780,720 840,850 870,900 930,980 1060,1120 1150,1220 1250,1330 1310,1410 8:1340,0 1400,310 1440,480 1490,680 1568,860 9:125,900 135,1050 130,1200 125,1350 140,1495";

const PYLONS =
  "2:42,1045 98,1105 114,1137 142,1152 155,1189 188,1220 232,1267 265,1320 417,1063 405,1142 395,1215 381,1293 370,1372 342,1398 305,1372 332,1440 356,1445 332,1512 820,1100 935,1126 859,1230 746,1262 628,1293 532,1398 438,1497 1360,1132 1406,1132 3:1076,1080 5:70,225 187,118 4:1523,225 1336,1003 8:102,603 1497,657 1480,680 9:215,530";

const MARSH =
  "2:172,1058 186,1080 690,1147 677,1168 674,1205 122,1325 6:716,645 716,674 716,747 8:1158,315 1193,321 1130,339 1165,351 1190,363 1138,369 1162,393 9:1530,416 1514,495 1354,368 7:1160,1322 1184,1347 1155,1364 1190,1382";

const PEAKS = "4:620,487 5:1248,972 6:367,1133 8:322,450 865,1223 9:867,324 600,990";
const SPRINGS = "4:470,672 9:742,1043";

// Trees of the woodland fill, one repeat of 344 x 256.
const TREES = [[14, 20], [76, 44], [140, 12], [204, 50], [270, 24], [322, 74], [34, 96], [110, 110], [172, 88], [240, 122], [300, 150], [16, 170], [78, 190], [150, 160], [206, 204], [268, 218], [120, 232], [330, 226]];

const LABELS = [
  { x: 915, y: 126, text: "Stará Lhota" },
  { x: 737, y: 598, text: "Gubrův Dvorec" },
  { x: 1692, y: 421, text: "Matějovice" },
  { x: 2670, y: 276, text: "Oldřichovice" },
  { x: 3008, y: 205, text: "Divišovice" },
  { x: 2820, y: 811, text: "Datelov" },
  { x: 3064, y: 878, text: "M" },
  { x: 352, y: 395, text: "Hraničář", kind: "peak" },
  { x: 352, y: 418, text: "833 m", kind: "peak" },
  { x: 1621, y: 564, text: "734 m", kind: "peak" },
  { x: 2044, y: 615, text: "Křížový", kind: "peak" },
  { x: 2044, y: 639, text: "vrch", kind: "peak" },
  { x: 2044, y: 663, text: "806 m", kind: "peak" },
  { x: 1032, y: 891, text: "582 m", kind: "peak" },
  { x: 1379, y: 1150, text: "661 m", kind: "peak" },
  { x: 2478, y: 849, text: "887 m", kind: "peak" },
  { x: 2247, y: 1067, text: "Malý Prenet", kind: "peak" },
  { x: 2247, y: 1091, text: "1005 m", kind: "peak" },
  { x: 1204, y: 732, text: "vodní nádrž", kind: "water" },
  { x: 1204, y: 762, text: "Nýrsko", kind: "water" },
  { x: 1182, y: 1020, text: "Úhlava", kind: "water", turn: 88 },
  { x: 900, y: 288, text: "Uhlava", kind: "water", turn: 82 },
  { x: 600, y: 594, text: "Nýrsko", kind: "area", turn: 12 },
  { x: 172, y: 706, text: "Chudenín", kind: "area", turn: -58 },
  { x: 1308, y: 460, text: "Dešenice", kind: "area", turn: 68 },
  { x: 2506, y: 1028, text: "Dešenice", kind: "area", turn: 58 },
  { x: 1590, y: 1074, text: "Zelená Lhota", kind: "town" },
];

const LABEL_STYLES = {
  place: "fill-[#4b4b4b] text-[20px]",
  peak: "fill-[#94603f] text-[20px]",
  water: "fill-[#6a86c2] text-[24px] italic",
  area: "fill-[#95749c] text-[20px]",
  town: "fill-[#7d7a7d] text-[26px]",
};

const SHIELDS = [
  { x: 1075, y: 234, w: 52, text: "190", fill: "#ecedc9" },
  { x: 2730, y: 83, w: 78, text: "19020", fill: "#f4f4f0" },
  { x: 3045, y: 520, w: 78, text: "19022", fill: "#f4f4f0" },
];

function Terrain() {
  return (
    <svg viewBox={`0 0 ${MAP_W} ${MAP_H}`} preserveAspectRatio="xMidYMid slice" className="block size-full" aria-hidden="true">
      <defs>
        <g id="tree" className="fill-none stroke-[#9ebe92] stroke-2">
          <ellipse cx="-6" cy="-4" rx="5" ry="6" />
          <path d="M-6 -2V11M7 -12L3 4H11ZM7 -4V10" />
        </g>
        <pattern id="forest" width="344" height="256" patternUnits="userSpaceOnUse">
          <rect width="344" height="256" fill={FOREST} />
          {TREES.map(([x, y]) => <use key={`${x}-${y}`} href="#tree" x={x} y={y} />)}
        </pattern>
        <pattern id="orchard" width="16" height="16" patternUnits="userSpaceOnUse">
          <rect width="16" height="16" fill={ORCHARD} />
          <rect x="7" y="7" width="2" height="3" fill="#8dbb82" />
        </pattern>
      </defs>

      <rect width={MAP_W} height={MAP_H} fill="url(#forest)" />
      {LAND.map(([fill, src], i) => (
        <path key={i} d={polygon(src)} strokeLinejoin="round" fill={fill === "forest" ? "url(#forest)" : fill === ORCHARD ? "url(#orchard)" : fill} />
      ))}
      <path d={curve(LAKE, true)} fill="#b1d1de" />
      <path d={polygon("6:1082,990 1110,975 1190,990 1197,1090 1140,1222 1085,1095")} className="fill-none stroke-[#8fc184] stroke-5" />
      {LINES.map(([kind, src], i) => (
        <path key={i} d={curve(src)} className={LINE_STYLES[kind]} strokeLinecap="butt" strokeLinejoin="round" />
      ))}

      {GREEN_LANES.map((s, i) => <path key={i} d={curve(s)} className="fill-none stroke-[#a9bfa0] stroke-9" />)}
      {GREEN_LANES.map((s, i) => <path key={i} d={curve(s)} className="fill-none stroke-[#d6e8d0] stroke-5" />)}
      {WHITE_LANES.map((s, i) => <path key={i} d={curve(s)} className="fill-none stroke-[#c4c6bc] stroke-6" />)}
      {WHITE_LANES.map((s, i) => <path key={i} d={curve(s)} className="fill-none stroke-white stroke-4" />)}
      <path d={curve("8:790,375 860,490 980,600")} className="fill-none stroke-[#e3e6dc] stroke-4" />
      <path d={curve("8:1215,1135 1240,1200 1250,1300 1300,1495")} className="fill-none stroke-white stroke-4" />
      <path d={polygon("5:75,505 105,520 95,600 80,560")} fill={FARM} />
      <path d={polygon("5:100,570 122,522 212,520 262,565")} fill="#c9d7a8" />
      <path d={polyline("5:98,568 118,520 212,518 265,562")} className="fill-none stroke-[#6f716c] stroke-6" />
      <path d={polyline("5:90,600 93,588 265,588 270,575")} className="fill-none stroke-[#6f716c] stroke-3" />
      <path d={polyline("5:90,577 265,577")} className="fill-none stroke-white stroke-6" />

      {WHITE_ROADS.map((s, i) => <path key={i} d={curve(s)} className="fill-none stroke-[#b9bcb2] stroke-10" />)}
      {WHITE_ROADS.map((s, i) => <path key={i} d={curve(s)} className="fill-none stroke-white stroke-8" />)}
      {YELLOW_ROADS.map((s, i) => <path key={i} d={curve(s)} className="fill-none stroke-[#c9c98c] stroke-11" />)}
      {YELLOW_ROADS.map((s, i) => <path key={i} d={curve(s)} className="fill-none stroke-[#f6f8bd] stroke-8" />)}

      <path d={curve(RAILWAY)} className="fill-none stroke-[#7b7d7a] stroke-7" />
      <path d={curve(RAILWAY)} className="fill-none stroke-[#dfe2da] stroke-3 [stroke-dasharray:16_16]" />

      {toPoints(PYLONS).map(([x, y], i) => <rect key={i} x={x - 2} y={y - 2} width="5" height="5" className="fill-[#a9ab9f] stroke-[#777a74] stroke-2" />)}
      {toPoints(MARSH).map(([x, y], i) => <path key={i} d={`M${x - 7} ${y}h14`} className="stroke-[#6aa5e0] stroke-3" />)}
      {toPoints(PEAKS).map(([x, y], i) => <path key={i} d={`M${x} ${y - 7}l7 13h-14z`} className="fill-[#d08a5c]" />)}
      {toPoints(SPRINGS).map(([x, y], i) => <circle key={i} cx={x} cy={y} r="7" className="fill-[#e8f4f4] stroke-[#8dbdea] stroke-4" />)}

      {SHIELDS.map((s) => (
        <g key={s.text}>
          <rect x={s.x - s.w / 2} y={s.y - 16} width={s.w} height="32" rx="4" fill={s.fill} className="stroke-[#c7c9c1] stroke-2" />
          <text x={s.x} y={s.y + 8} textAnchor="middle" className="fill-[#5e5e5e] font-['Noto_Sans',sans-serif] text-[20px]">{s.text}</text>
        </g>
      ))}
      {LABELS.map((l, i) => (
        <text
          key={i}
          x={l.x}
          y={l.y}
          textAnchor="middle"
          transform={l.turn ? `rotate(${l.turn} ${l.x} ${l.y})` : undefined}
          className={`stroke-white/70 stroke-4 font-['Noto_Sans',sans-serif] [paint-order:stroke] [stroke-linejoin:round] ${LABEL_STYLES[l.kind || "place"]}`}
        >
          {l.text}
        </text>
      ))}
    </svg>
  );
}

/* ---------- checkpoints ---------- */

const CHECKPOINTS = [
  { n: 8, x: 1379, y: 261 },
  { n: 9, x: 1426, y: 295 },
  { n: 10, x: 1379, y: 320 },
  { n: 7, x: 1349, y: 343 },
  { n: 6, x: 1379, y: 371 },
  { n: 5, x: 1385, y: 493 },
  { n: 4, x: 1445, y: 543 },
  { n: 3, x: 1513, y: 587 },
  { n: 2, x: 1593, y: 623 },
  { n: 1, x: 1641, y: 657 },
  { n: 11, x: 1721, y: 793 },
];

function RouteMap() {
  return (
    <section aria-label="Mapa trasy" className="relative h-[1200px] w-full overflow-hidden rounded-2xl bg-[#b4d1a4] font-['Liberation_Sans',Arial,sans-serif]">
      <Terrain />
      {CHECKPOINTS.map((c) => (
        <button
          key={c.n}
          type="button"
          className="absolute flex size-[58px] -translate-1/2 items-center justify-center rounded-full border-2 border-black bg-[#a09fab] text-[32px] font-bold text-black"
          style={{ left: `${(c.x / MAP_W) * 100}%`, top: `${(c.y / MAP_H) * 100}%` }}
        >
          {c.n}
        </button>
      ))}
      <div className="absolute top-5 left-5 flex flex-col rounded-lg border-4 border-black/20 bg-clip-padding">
        <button type="button" aria-label="Přiblížit" className="flex size-15 items-center justify-center rounded-t-sm border-b-2 border-[#ccc] bg-white pt-2 text-[44px] leading-none font-bold text-black">+</button>
        <button type="button" aria-label="Oddálit" className="flex size-15 items-center justify-center rounded-b-sm bg-white pt-2 text-[44px] leading-none font-bold text-black">−</button>
      </div>
      <div className="absolute right-0 bottom-0 flex h-[34px] items-center bg-white/80 px-2.5">
        <a href="#leaflet" className="flex items-center gap-2 text-[24px] leading-none text-[#2f7cae]">
          <svg viewBox="0 0 24 16" className="h-4 w-6" aria-hidden="true">
            <path d="M0 0h24v8H0z" fill="#4c7be1" />
            <path d="M0 8h24v8H0z" fill="#ffd500" />
          </svg>
          Leaflet
        </a>
      </div>
    </section>
  );
}

/* ---------- page chrome ---------- */

function ExitIcon() {
  return (
    <svg viewBox="0 0 34 30" className="h-[30px] w-[34px] fill-none stroke-current stroke-3" aria-hidden="true">
      <path d="M17 2H4Q2 2 2 4V26Q2 28 4 28H17" />
      <path d="M10 15H32M25 8L32 15L25 22" />
    </svg>
  );
}

function Header() {
  return (
    <header className="flex h-[120px] shrink-0 items-center justify-between bg-[#285230] px-[174px] text-white">
      <a href="#domu" className="text-[42px] font-extrabold">STOPOVAČKA</a>
      <div className="flex items-center gap-5 text-[29px]">
        <span>test</span>
        <span>|</span>
        <button type="button" aria-label="Odhlásit se"><ExitIcon /></button>
      </div>
      <nav className="flex gap-6 text-[33px]">
        <a href="#trasy">Trasy</a>
        <a href="#zebricek">Žebříček</a>
      </nav>
    </header>
  );
}

function RainbowStops() {
  return (
    <>
      <stop offset="0" stopColor="#7fb840" />
      <stop offset="0.33" stopColor="#b4d650" />
      <stop offset="0.36" stopColor="#f3e64f" />
      <stop offset="0.64" stopColor="#f3e64f" />
      <stop offset="0.67" stopColor="#efb84a" />
      <stop offset="1" stopColor="#e57b34" />
    </>
  );
}

function Footer() {
  return (
    <footer className="flex h-[94px] shrink-0 items-start justify-center gap-[166px] overflow-hidden bg-[#285230] pl-3 font-['Open_Sans',sans-serif]">
      <svg viewBox="0 0 530 160" className="h-[160px] w-[530px] shrink-0">
        <defs><linearGradient id="bow-a"><RainbowStops /></linearGradient></defs>
        <path d="M153 72Q178 37 215 37T277 70" fill="none" stroke="url(#bow-a)" strokeWidth="6" />
        <g className="fill-[#4468b4] stroke-[#7f9dbb] stroke-1 text-[80px]">
          <text x="-4" y="126">EduCentre</text>
          <text x="394" y="126">CZ</text>
        </g>
        <text transform="translate(520 138) rotate(-90)" className="fill-[#7f9dbb] text-[38px]">s.r.o.</text>
      </svg>
      <svg viewBox="0 0 410 160" className="h-[160px] w-[410px] shrink-0">
        <defs><linearGradient id="bow-b"><RainbowStops /></linearGradient></defs>
        <path d="M90 68Q115 34 150 34T211 68" fill="none" stroke="url(#bow-b)" strokeWidth="6" />
        <text x="-2" y="126" className="fill-[#3f72b8] text-[80px]">SmartEdu</text>
        <text transform="translate(402 138) rotate(-90)" className="fill-[#3f72b8] text-[38px]">s.r.o.</text>
      </svg>
    </footer>
  );
}

export default function App() {
  return (
    <div className="flex h-screen flex-col overflow-hidden bg-[#152c19] font-['Inter',sans-serif]">
      <div className="h-[76px] shrink-0 bg-black" />
      <Header />
      <main className="flex-1 px-[174px] pt-22">
        <h1 className="mb-14 text-center text-[78px] leading-[96px] font-bold text-white">Pokračuj v hledání dalších QR kódů</h1>
        <RouteMap />
      </main>
      <Footer />
    </div>
  );
}
